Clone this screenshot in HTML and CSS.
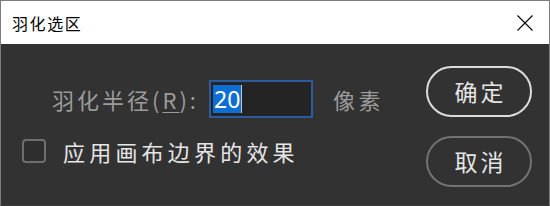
FILE: index.html
```html
<!DOCTYPE html>
<html lang="zh">
<head>
<meta charset="utf-8">
<title>羽化选区</title>
<link rel="stylesheet" href="styles.css">
</head>
<body>
<div class="window">
  <div class="titlebar">
    <span class="title">羽化选区</span>
    <svg class="close" width="16" height="16" viewBox="0 0 16 16"><path d="M0.5 0.5 L15.5 15.5 M15.5 0.5 L0.5 15.5" stroke="#000" stroke-width="1.1" fill="none"/></svg>
  </div>
  <div class="body">
    <div class="main">
      <div class="row1">
        <span class="label">羽化半径(<u>R</u>):</span>
        <div class="field"><span class="sel">20</span><span class="caret"></span></div>
        <span class="unit">像素</span>
      </div>
      <div class="row2">
        <span class="checkbox"></span>
        <span class="check-label">应用画布边界的效果</span>
      </div>
    </div>
    <div class="actions">
      <div class="btn primary">确定</div>
      <div class="btn secondary">取消</div>
    </div>
  </div>
</div>
</body>
</html>
```
FILE: styles.css
```css
html, body { margin: 0; padding: 0; }
body {
  width: 550px;
  height: 206px;
  overflow: hidden;
  background: #323232;
  font-family: "Noto Sans CJK SC", "Noto Sans", sans-serif;
}
.window {
  width: 550px;
  height: 206px;
  box-sizing: border-box;
  border: 1px solid #7c7c7c;
  border-bottom: 1px solid #3c3c3c;
  display: flex;
  flex-direction: column;
}
.titlebar {
  height: 43px;
  background: #ffffff;
  display: flex;
  align-items: center;
  justify-content: space-between;
  padding: 0 16px 0 11px;
  flex: none;
}
.title {
  font-size: 16px;
  letter-spacing: 1.6px;
  color: #000;
  line-height: 1;
}
.close { display: block; }
.body {
  flex: 1;
  display: flex;
  background: #323232;
}
.main {
  flex: 1;
  padding: 36px 0 0 21px;
}
.row1 {
  display: flex;
  align-items: center;
  height: 38px;
  margin-left: 30px;
}
.label {
  width: 157px;
  flex: none;
  font-size: 22px;
  letter-spacing: 3px;
  color: #9b9b9b;
  line-height: 1;
}
.label u { text-underline-offset: 3px; text-decoration-thickness: 1px; }
.field {
  width: 104px;
  height: 38px;
  box-sizing: border-box;
  border: 2px solid #2c5c9f;
  background: #242424;
  display: flex;
  align-items: center;
  padding-left: 2px;
}
.sel {
  background: #0d6fd3;
  color: #ffffff;
  font-family: "Noto Sans", sans-serif;
  font-size: 23px;
  line-height: 28px;
  height: 28px;
  padding: 0 1px;
}
.caret {
  width: 1px;
  height: 28px;
  background: #c8c8c8;
}
.unit {
  margin-left: 20px;
  font-size: 22px;
  letter-spacing: 3.6px;
  color: #9b9b9b;
  line-height: 1;
}
.row2 {
  display: flex;
  align-items: center;
  margin-top: 21px;
  height: 24px;
}
.checkbox {
  width: 24px;
  height: 24px;
  box-sizing: border-box;
  border: 2px solid #6e6e6e;
  border-radius: 4px;
  background: #2e2e2e;
  flex: none;
}
.check-label {
  margin-left: 17px;
  font-size: 22px;
  letter-spacing: 4.2px;
  color: #e6e6e6;
  line-height: 1;
}
.actions {
  display: flex;
  flex-direction: column;
  gap: 19px;
  padding: 22px 17px 0 0;
}
.btn {
  width: 106px;
  height: 51px;
  box-sizing: border-box;
  border-radius: 26px;
  display: flex;
  align-items: center;
  justify-content: center;
  font-size: 23px;
  letter-spacing: 3px;
  padding-left: 3px;
  color: #e4e4e4;
  line-height: 1;
}
.primary { border: 2px solid #dcdcdc; }
.secondary { border: 2px solid #727272; }
```
